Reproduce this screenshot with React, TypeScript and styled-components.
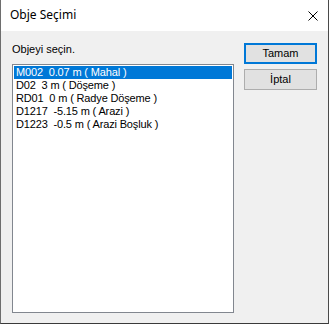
import React, { useState } from "react";
import styled, { createGlobalStyle } from "styled-components";

const Global = createGlobalStyle`
  html, body { margin: 0; padding: 0; background: #ffffff; }
  * { box-sizing: border-box; }
`;

const Window = styled.div`
  width: 329px;
  height: 324px;
  display: flex;
  flex-direction: column;
  border-left: 1px solid #6e6e6e;
  border-right: 1px solid #4a4a4a;
  border-bottom: 1px solid #3a3a3a;
  background: #f0f0f0;
`;

const TitleBar = styled.div`
  height: 31px;
  flex: none;
  background: #ffffff;
  display: flex;
  align-items: center;
  justify-content: space-between;
  padding: 0 10px 0 9px;
  font-family: "Noto Sans", "Open Sans", sans-serif;
  font-size: 12px;
  color: #000;
`;

const Title = styled.span`
  line-height: 16px;
  margin-top: -1px;
`;

const CloseIcon = styled.svg`
  width: 10px;
  height: 10px;
`;

const Body = styled.div`
  flex: 1;
  display: flex;
  gap: 10px;
  padding: 12px 11px 10px 11px;
  font-family: "Liberation Sans", Arial, sans-serif;
  font-size: 11px;
  color: #000;
`;

const LeftColumn = styled.div`
  width: 222px;
  display: flex;
  flex-direction: column;
`;

const Label = styled.div`
  line-height: 13px;
  height: 13px;
  margin-bottom: 8px;
`;

const ListBox = styled.div`
  flex: 1;
  border: 1px solid #82878f;
  background: #ffffff;
  padding: 1px;
`;

const Item = styled.div<{ $selected?: boolean }>`
  height: 13px;
  line-height: 13px;
  padding-left: 2px;
  white-space: pre;
  letter-spacing: -0.15px;
  background: ${(p) => (p.$selected ? "#0078d7" : "transparent")};
  color: ${(p) => (p.$selected ? "#ffffff" : "#000000")};
`;

const RightColumn = styled.div`
  width: 73px;
  display: flex;
  flex-direction: column;
  gap: 5px;
`;

const Button = styled.button<{ $default?: boolean }>`
  height: 21px;
  width: 73px;
  padding: 0;
  margin: 0;
  background: #e1e1e1;
  border: ${(p) => (p.$default ? "2px solid #0078d7" : "1px solid #adadad")};
  font-family: "Liberation Sans", Arial, sans-serif;
  font-size: 11px;
  color: #000;
  line-height: 13px;
`;

const items = [
  "M002  0.07 m ( Mahal )",
  "D02  3 m ( Döşeme )",
  "RD01  0 m ( Radye Döşeme )",
  "D1217  -5.15 m ( Arazi )",
  "D1223  -0.5 m ( Arazi Boşluk )",
];

export default function App() {
  const [selected, setSelected] = useState(0);
  return (
    <>
      <Global />
      <Window>
        <TitleBar>
          <Title>Obje Seçimi</Title>
          <CloseIcon viewBox="0 0 10 10">
            <path d="M0.5 0.5 L9.5 9.5 M9.5 0.5 L0.5 9.5" stroke="#000" strokeWidth="1" fill="none" />
          </CloseIcon>
        </TitleBar>
        <Body>
          <LeftColumn>
            <Label>Objeyi seçin.</Label>
            <ListBox>
              {items.map((t, i) => (
                <Item key={t} $selected={i === selected} onClick={() => setSelected(i)}>
                  {t}
                </Item>
              ))}
            </ListBox>
          </LeftColumn>
          <RightColumn>
            <Button $default>Tamam</Button>
            <Button>İptal</Button>
          </RightColumn>
        </Body>
      </Window>
    </>
  );
}
